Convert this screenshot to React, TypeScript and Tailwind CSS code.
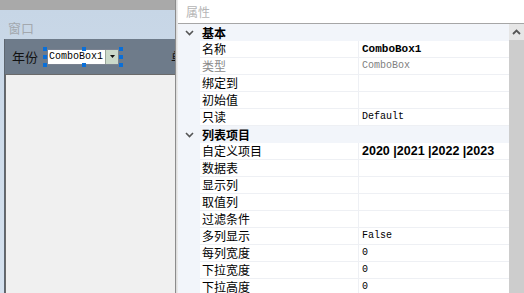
import React from 'react'

type Row =
  | { kind: 'cat'; label: string }
  | { kind: 'prop'; label: string; value?: string; nameMuted?: boolean; valueClass?: string }

const mono = "font-['Liberation_Mono',monospace] text-[10px] text-black"

const rows: Row[] = [
  { kind: 'cat', label: '基本' },
  { kind: 'prop', label: '名称', value: 'ComboBox1', valueClass: "font-['Liberation_Mono',monospace] font-bold text-[11px] text-black" },
  { kind: 'prop', label: '类型', value: 'ComboBox', nameMuted: true, valueClass: "font-['Liberation_Mono',monospace] text-[10px] text-[#808080]" },
  { kind: 'prop', label: '绑定到' },
  { kind: 'prop', label: '初始值' },
  { kind: 'prop', label: '只读', value: 'Default', valueClass: mono },
  { kind: 'cat', label: '列表项目' },
  { kind: 'prop', label: '自定义项目', value: '2020 |2021 |2022 |2023', valueClass: "font-['Liberation_Sans',sans-serif] font-bold text-[12.5px] text-black" },
  { kind: 'prop', label: '数据表' },
  { kind: 'prop', label: '显示列' },
  { kind: 'prop', label: '取值列' },
  { kind: 'prop', label: '过滤条件' },
  { kind: 'prop', label: '多列显示', value: 'False', valueClass: mono },
  { kind: 'prop', label: '每列宽度', value: '0', valueClass: mono },
  { kind: 'prop', label: '下拉宽度', value: '0', valueClass: mono },
  { kind: 'prop', label: '下拉高度', value: '0', valueClass: mono },
]

const Handle = ({ className }: { className: string }) => (
  <div className={`absolute size-[4px] bg-[#0a6fd8] ${className}`} />
)

const Chevron = () => (
  <svg width="9" height="6" viewBox="0 0 9 6" className="text-[#555]">
    <polyline points="1,1 4.5,4.5 8,1" fill="none" stroke="currentColor" strokeWidth="1.6" />
  </svg>
)

const App = () => {
  return (
    <div className="flex h-[293px] w-[524px] overflow-hidden bg-white font-['Noto_Sans_CJK_SC',sans-serif]">
      {/* designer side */}
      <div className="flex w-[175px] flex-none flex-col overflow-hidden">
        <div className="h-[10px] flex-none bg-[#a9a9a9]" />
        <div className="flex flex-1 flex-col bg-gradient-to-b from-[#c7d6e6] to-[#d6e2ef]">
          <div className="flex h-[29px] flex-none items-center pl-[8px] pt-[5px] text-[13px] leading-none text-[#a3a8ae]">窗口</div>
          <div className="ml-[4px] flex flex-1 flex-col border-l border-[#5d6670]">
            <div className="relative flex h-[35px] flex-none items-center whitespace-nowrap bg-[#6e7b8a] pl-[7px] text-[13px] text-[#111]">
              <span className="flex-none">年份</span>
              <div className="relative ml-[9px] flex h-[16px] w-[72px] flex-none border border-[#7a8290] bg-white">
                <div className="flex flex-1 items-center pl-[1px] font-['Liberation_Mono',monospace] text-[10px] leading-none text-black">ComboBox1</div>
                <div className="flex w-[13px] items-center justify-center border-l border-[#9aa69a] bg-[#cbd9ca]">
                  <svg width="5" height="3" viewBox="0 0 5 3"><polygon points="0,0 5,0 2.5,3" fill="#111" /></svg>
                </div>
                <Handle className="left-[-5px] top-[-3px]" />
                <Handle className="left-[34px] top-[-3px]" />
                <Handle className="right-[-5px] top-[-3px]" />
                <Handle className="left-[-5px] top-[5px]" />
                <Handle className="right-[-5px] top-[5px]" />
                <Handle className="bottom-[-3px] left-[-5px]" />
                <Handle className="bottom-[-3px] left-[34px]" />
                <Handle className="bottom-[-3px] right-[-5px]" />
              </div>
              <span className="ml-[52px] flex-none">单位</span>
            </div>
            <div className="flex-1 border-l border-t border-[#6a6a6a] bg-[#f0f0f0]" />
          </div>
        </div>
      </div>
      {/* splitter */}
      <div className="w-[1px] flex-none bg-[#8c8c8c]" />
      <div className="w-[2px] flex-none bg-gradient-to-r from-[#d8d8d8] to-[#efefef]" />
      {/* property grid */}
      <div className="flex min-w-0 flex-1 flex-col">
        <div className="flex h-[24px] flex-none items-center border-b border-[#a6a6a6] pl-[8px] text-[12px] leading-none text-[#b5b5b5]">
          属性
        </div>
        <div className="flex flex-1 overflow-hidden">
          <div className="flex-1 bg-[#f2f5fa]">
            {rows.map((r, i) =>
              r.kind === 'cat' ? (
                <div key={i} className="flex h-[17px] items-center">
                  <div className="flex w-[22px] justify-center pl-[1px]"><Chevron /></div>
                  <span className="pl-[2px] text-[12px] font-bold leading-none text-black">{r.label}</span>
                </div>
              ) : (
                <div key={i} className="flex h-[17px]">
                  <div className="w-[22px] flex-none" />
                  <div className={`flex w-[158px] flex-none items-center border-b border-[#eef0f4] bg-white pl-[2px] text-[12px] leading-none ${r.nameMuted ? 'text-[#8a8a8a]' : 'text-black'}`}>
                    {r.label}
                  </div>
                  <div className={`flex flex-1 items-center whitespace-nowrap border-b border-l border-[#eef0f4] bg-white pl-[3px] leading-none ${r.valueClass ?? ''}`}>
                    {r.value}
                  </div>
                </div>
              )
            )}
          </div>
          <div className="flex w-[15px] flex-none flex-col bg-[#cdcdcd]">
            <div className="flex h-[16px] items-center justify-center bg-[#e6e6e6]">
              <svg width="9" height="6" viewBox="0 0 9 6"><polyline points="1,5 4.5,1.5 8,5" fill="none" stroke="#555" strokeWidth="1.8" /></svg>
            </div>
          </div>
        </div>
      </div>
    </div>
  )
}

export default App
